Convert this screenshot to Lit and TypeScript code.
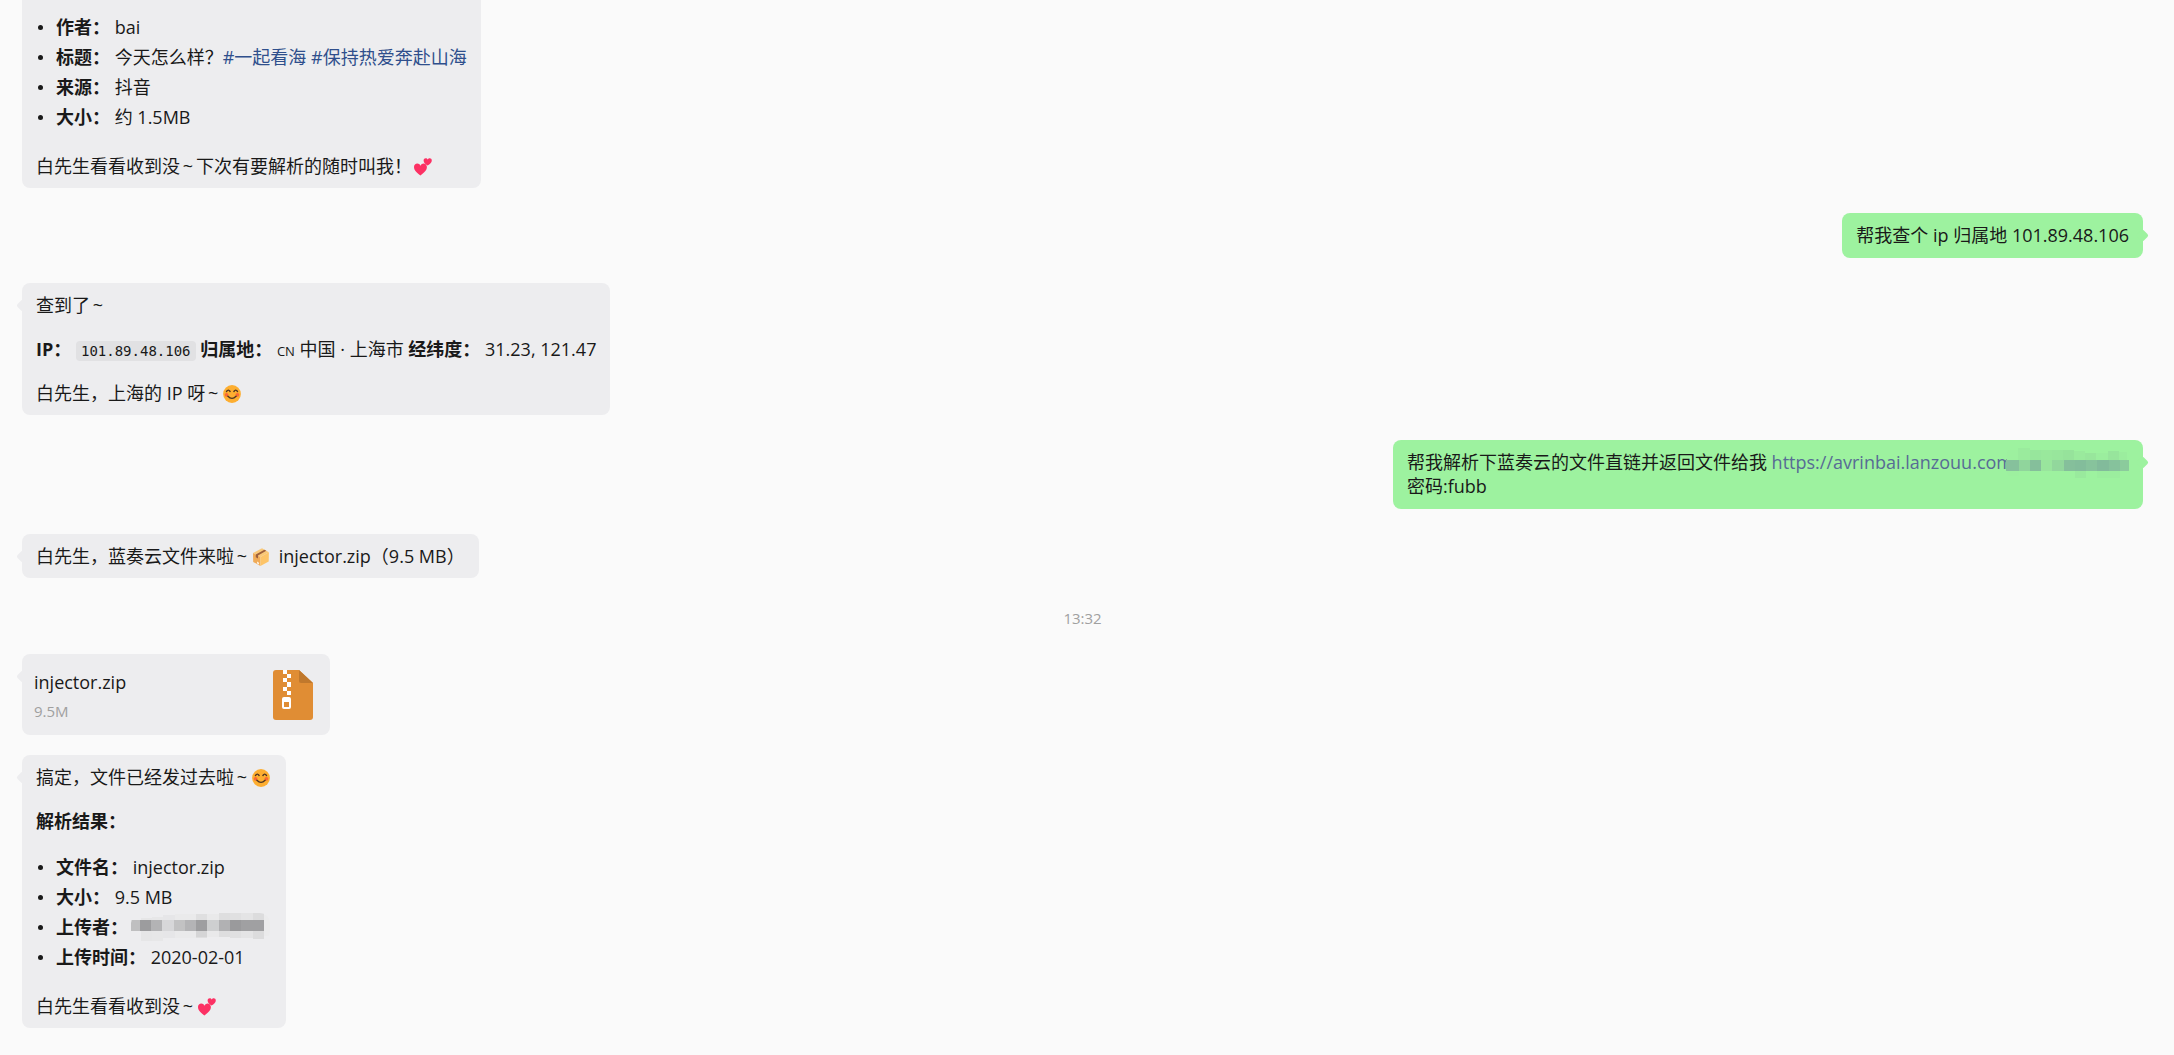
import { LitElement, html, css, svg } from "lit";
import { customElement } from "lit/decorators.js";

type Cell = [x: number, y: number, width: number, height: number, fill: string];

/** A pixelated strip laid over a redacted piece of text. */
const mosaic = (name: string, width: number, height: number, cells: Cell[]) =>
  html`<svg class="mosaic ${name}" width=${width} height=${height} viewBox="0 0 ${width} ${height}" aria-hidden="true">
    ${cells.map(([x, y, w, h, fill]) => svg`<rect x=${x} y=${y} width=${w} height=${h} fill=${fill} />`)}
  </svg>`;

const linkMosaic: Cell[] = [
  [1, 2, 12, 26, "#9df09f"],
  [0, 12, 13, 11, "#86c19c"],
  [12, 0, 12, 12, "#9aeb9d"],
  [24, 2, 11, 10, "#97e69c"],
  [35, 2, 11, 10, "#99e89c"],
  [46, 2, 11, 10, "#98e69c"],
  [57, 2, 11, 10, "#96e39b"],
  [68, 3, 11, 9, "#9aea9d"],
  [79, 5, 11, 7, "#98e69c"],
  [90, 5, 12, 7, "#9bee9e"],
  [102, 3, 11, 9, "#97e59c"],
  [113, 4, 8, 8, "#9bed9e"],
  [13, 12, 11, 11, "#90d59c"],
  [24, 12, 11, 11, "#85bf9b"],
  [35, 12, 11, 11, "#99e59d"],
  [46, 12, 12, 11, "#92d79c"],
  [58, 12, 11, 11, "#85bf9b"],
  [69, 12, 11, 11, "#83bd9b"],
  [80, 12, 11, 11, "#87c39c"],
  [91, 12, 12, 11, "#82bb9b"],
  [103, 12, 11, 11, "#86c29c"],
  [114, 12, 9, 11, "#8bcb9c"],
  [69, 23, 11, 7, "#99ea9d"],
  [91, 23, 23, 7, "#9bee9e"],
];

const nameMosaic: Cell[] = [
  [1, 8, 9, 7, "#ebebec"],
  [10, 5, 11, 23, "#e6e6e7"],
  [21, 4, 11, 24, "#e7e7e8"],
  [32, 2, 12, 23, "#e6e6e8"],
  [44, 1, 21, 24, "#eaeaeb"],
  [65, 1, 11, 24, "#dfdfe0"],
  [76, 1, 12, 23, "#e9e9ea"],
  [88, 0, 11, 24, "#dededf"],
  [99, 0, 11, 25, "#e0e0e1"],
  [110, 0, 12, 25, "#e4e4e5"],
  [122, 0, 11, 26, "#dcdcdd"],
  [133, 2, 6, 21, "#ebebec"],
  [0, 7, 9, 11, "#bfbfc0"],
  [9, 7, 11, 11, "#9c9c9e"],
  [20, 7, 11, 11, "#b3b3b5"],
  [31, 7, 12, 11, "#d7d7d9"],
  [43, 7, 11, 11, "#c2c2c3"],
  [54, 7, 11, 11, "#b4b4b6"],
  [65, 7, 11, 11, "#9e9ea0"],
  [76, 7, 12, 11, "#cecfd0"],
  [88, 7, 11, 11, "#b1b1b3"],
  [99, 7, 11, 11, "#9a9a9c"],
  [110, 7, 23, 11, "#a0a0a2"],
  [65, 18, 11, 6, "#d5d5d6"],
];

const hearts = html`<svg class="emoji" viewBox="0 0 18 18" aria-hidden="true">
    <path fill="#fc3164" d="M6.4 17.6C3 15 0 12.500 0 9.100 0 6.900 1.500 5.500 3.300 5.500 4.700 5.500 5.800 6.300 6.500 7.700 7.200 6.300 8.300 5.500 9.600 5.500 11.500 5.500 12.900 7 12.900 9.100 12.900 12.500 9.800 15 6.400 17.600Z" />
    <path fill="#fc3164" d="M13.600 7.600C11.300 6 9.600 4.500 9.600 2.500 9.600 1.100 10.600.2 11.700.2 12.600.2 13.300.7 13.700 1.500 14.200.7 14.900.2 15.700.2 16.900.2 17.800 1.100 17.800 2.500 17.800 4.500 15.900 6.100 13.600 7.600Z" />
  </svg>`;

const smile = html`<svg class="emoji" viewBox="0 0 18 18" aria-hidden="true">
    <circle cx="9" cy="9" r="8.900" fill="#fdae30" />
    <circle cx="3.600" cy="9.800" r="1.900" fill="#fb6a35" />
    <circle cx="14.400" cy="9.800" r="1.900" fill="#fb6a35" />
    <path d="M3.500 6.500Q5.300 3.800 7.100 6.500M10.900 6.500Q12.700 3.800 14.500 6.500M4.900 11.200Q9 15.600 13.100 11.200" fill="none" stroke="#4d3423" stroke-width="1.400" stroke-linecap="round" />
  </svg>`;

const parcel = html`<svg class="emoji parcel" viewBox="0 0 18 18" aria-hidden="true">
    <path fill="#f9c878" d="M1 5 10 .3 16.900 4.200 8.400 9Z" />
    <path fill="#f0ab58" d="M1 5 8.400 9V17.900L1.200 13.900Z" />
    <path fill="#fdc468" d="M8.400 9 16.900 4.200 16.700 13.400 8.400 17.900Z" />
    <path fill="#9c5f3c" d="M3.800 6.500 12.400 1.700 14.300 2.800 6 7.600V10.400L3.800 9.200Z" />
    <path fill="#fff0dc" d="M5 13.600 7 14.700V16.600L5 15.500Z" />
  </svg>`;

const tilde = html`<span class="tilde">~</span>`;

const zipIcon = html`<svg class="zip" viewBox="0 0 40 50" aria-hidden="true">
    <path fill="#e08d34" d="M3 0H26L40 13V47A3 3 0 0 1 37 50H3A3 3 0 0 1 0 47V3A3 3 0 0 1 3 0Z" />
    <path fill="#c0782c" d="M26 0 40 13H28A2 2 0 0 1 26 11Z" />
    <path fill="#fff" d="M10 0H14V4H10ZM14 4H18V8H14ZM10 8H14V12H10ZM14 12H18V17H14ZM10 17H14V21H10ZM14 21H18V25H14Z" />
    <path fill="#fff" fill-rule="evenodd" d="M11 27H16A2 2 0 0 1 18 29V37A2 2 0 0 1 16 39H11A2 2 0 0 1 9 37V29A2 2 0 0 1 11 27ZM11 32V37H16V32Z" />
  </svg>`;

@customElement("app-root")
export class AppRoot extends LitElement {
  static styles = css`
    :host {
      display: block;
      min-height: 100vh;
      background: #fafafa;
      color: #191919;
      font-family: "Open Sans", "Noto Sans CJK SC", sans-serif;
      font-size: 18px;
      line-height: 24px;
    }
    .chat {
      display: flex;
      flex-direction: column;
      align-items: flex-start;
      gap: 25px;
      padding: 0 31px 27px 22px;
    }
    .bubble {
      position: relative;
      box-sizing: border-box;
      max-width: 80%;
      padding: 10px 14px;
      border-radius: 8px;
      background: #ededef;
    }
    .bubble::before {
      content: "";
      position: absolute;
      top: 18px;
      left: -4px;
      width: 9px;
      height: 9px;
      border-radius: 2px;
      background: inherit;
      transform: rotate(45deg);
    }
    .continued {
      padding-top: 12px;
      border-radius: 0 0 8px 8px;
    }
    .continued::before {
      content: none;
    }
    .mine {
      align-self: flex-end;
      padding-bottom: 11px;
      background: #9df29f;
    }
    .mine::before {
      left: auto;
      right: -4px;
    }
    p {
      margin: 0;
    }
    p + p {
      margin-top: 20px;
    }
    ul {
      margin: 0;
      padding: 0;
      list-style: none;
    }
    p + ul {
      margin-top: 19px;
    }
    ul + p {
      margin-top: 22px;
    }
    li {
      display: flex;
      align-items: center;
      line-height: 30px;
    }
    li::before {
      content: "";
      flex: none;
      width: 5px;
      height: 5px;
      margin: 0 13px 0 2px;
      border-radius: 50%;
      background: #191919;
    }
    a {
      color: #2f4f8c;
      text-decoration: none;
    }
    .mine a {
      color: #576b95;
    }
    code {
      padding: 2px 5px;
      border-radius: 4px;
      background: #e1e1e3;
      font-family: "DejaVu Sans Mono", monospace;
      font-size: 14px;
      line-height: 16px;
    }
    .region {
      font-size: 13px;
      line-height: 16px;
    }
    .tilde {
      display: inline-block;
      width: 16px;
      text-align: center;
    }
    .emoji {
      width: 18px;
      height: 18px;
      margin: 0 2px;
      vertical-align: -3px;
    }
    .parcel {
      margin-right: 4px;
    }
    .mosaic {
      position: relative;
    }
    .on-link {
      margin: -10px 0 -6px -7px;
      vertical-align: -3px;
      border-radius: 8px;
    }
    .on-name {
      margin-left: 3px;
      border-radius: 10px;
    }
    time {
      align-self: center;
      margin: 5px 0 1px;
      color: #a0a0a0;
      font-size: 15px;
      line-height: 20px;
    }
    .results {
      display: flex;
      flex-direction: column;
      align-items: flex-start;
      gap: 20px;
      width: 100%;
    }
    .file {
      display: flex;
      align-items: flex-start;
      justify-content: space-between;
      width: 308px;
      padding: 16px 17px 12px 12px;
    }
    .name,
    .size {
      display: block;
    }
    .size {
      margin-top: 5px;
      color: #a0a0a0;
      font-size: 15px;
    }
    .zip {
      width: 40px;
      height: 50px;
    }
  `;

  render() {
    return html`
      <main class="chat">
        <article class="bubble continued">
          <ul>
            <li><span><b>作者：</b> bai</span></li>
            <li><span><b>标题：</b> 今天怎么样？<a href="#sea">#一起看海</a> <a href="#love">#保持热爱奔赴山海</a></span></li>
            <li><span><b>来源：</b> 抖音</span></li>
            <li><span><b>大小：</b> 约 1.5MB</span></li>
          </ul>
          <p>白先生看看收到没${tilde}下次有要解析的随时叫我！${hearts}</p>
        </article>

        <article class="bubble mine"><p>帮我查个 ip 归属地 101.89.48.106</p></article>

        <article class="bubble">
          <p>查到了${tilde}</p>
          <p><b>IP：</b> <code>101.89.48.106</code> <b>归属地：</b> <span class="region">CN</span> 中国 · 上海市 <b>经纬度：</b> 31.23, 121.47</p>
          <p>白先生，上海的 IP 呀${tilde}${smile}</p>
        </article>

        <article class="bubble mine">
          <p>帮我解析下蓝奏云的文件直链并返回文件给我 <a href="#file">https://avrinbai.lanzouu.com${mosaic("on-link", 123, 30, linkMosaic)}</a><br />密码:fubb</p>
        </article>

        <article class="bubble"><p>白先生，蓝奏云文件来啦${tilde}${parcel} injector.zip（9.5 MB）</p></article>

        <time>13:32</time>

        <div class="results">
          <article class="bubble file">
            <div>
              <span class="name">injector.zip</span>
              <span class="size">9.5M</span>
            </div>
            ${zipIcon}
          </article>

          <article class="bubble">
            <p>搞定，文件已经发过去啦${tilde}${smile}</p>
            <p><b>解析结果：</b></p>
            <ul>
              <li><span><b>文件名：</b> injector.zip</span></li>
              <li><span><b>大小：</b> 9.5 MB</span></li>
              <li><b>上传者：</b> ${mosaic("on-name", 139, 28, nameMosaic)}</li>
              <li><span><b>上传时间：</b> 2020-02-01</span></li>
            </ul>
            <p>白先生看看收到没${tilde}${hearts}</p>
          </article>
        </div>
      </main>
    `;
  }
}
